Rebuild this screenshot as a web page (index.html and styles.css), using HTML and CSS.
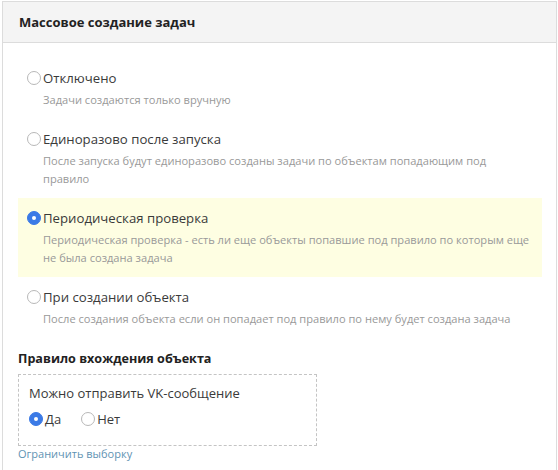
FILE: index.html
```html
<!DOCTYPE html>
<html lang="ru">
<head>
<meta charset="utf-8">
<link rel="stylesheet" href="styles.css">
</head>
<body>
<div class="panel">
  <div class="panel-head">Массовое создание задач</div>
  <div class="panel-body">
    <div class="options">
      <div class="option">
        <div class="label"><span class="radio"></span>Отключено</div>
        <div class="desc">Задачи создаются только вручную</div>
      </div>
      <div class="option">
        <div class="label"><span class="radio"></span>Единоразово после запуска</div>
        <div class="desc">После запуска будут единоразово созданы задачи по объектам попадающим под<br>правило</div>
      </div>
      <div class="option active">
        <div class="label"><span class="radio checked"></span>Периодическая проверка</div>
        <div class="desc">Периодическая проверка - есть ли еще объекты попавшие под правило по которым еще<br>не была создана задача</div>
      </div>
      <div class="option">
        <div class="label"><span class="radio"></span>При создании объекта</div>
        <div class="desc">После создания объекта если он попадает под правило по нему будет создана задача</div>
      </div>
    </div>
    <div class="section-title">Правило вхождения объекта</div>
    <div class="rule-box">
      <div class="rule-name">Можно отправить VK-сообщение</div>
      <div class="rule-choices">
        <span class="choice"><span class="radio checked"></span>Да</span>
        <span class="choice"><span class="radio"></span>Нет</span>
      </div>
    </div>
    <a class="link" href="#">Ограничить выборку</a>
  </div>
</div>
</body>
</html>
```
FILE: styles.css
```css
html, body {
  margin: 0;
  padding: 0;
  background: #fff;
}
body {
  font-family: "Open Sans", "Liberation Sans", Arial, sans-serif;
  color: #333;
  padding: 1px 1px 0 2px;
}
.panel {
  border: 1px solid #dcdcdc;
  border-bottom: none;
  height: 480px;
  box-sizing: border-box;
}
.panel-head {
  height: 40px;
  background: #f4f4f4;
  border-bottom: 1px solid #dcdcdc;
  padding-left: 16px;
  display: flex;
  align-items: center;
  font-weight: bold;
  font-size: 13px;
  color: #222;
}
.panel-body {
  padding: 15px 15px 0 15px;
}
.options {
  display: flex;
  flex-direction: column;
  width: 524px;
}
.option {
  padding: 10px 4px 10px 9px;
}
.option.active {
  background: #fefee2;
}
.label {
  display: flex;
  align-items: center;
  font-size: 13.2px;
  line-height: 20px;
  color: #3a3a3a;
}
.radio {
  width: 12px;
  height: 12px;
  border: 1px solid #b8b8b8;
  border-radius: 50%;
  box-sizing: content-box;
  margin-right: 2px;
  background: #fff;
  position: relative;
  flex: none;
}
.radio.checked {
  background: #3b7ae6;
  border-color: #3b7ae6;
}
.radio.checked::after {
  content: "";
  position: absolute;
  left: 4px;
  top: 4px;
  width: 4px;
  height: 4px;
  border-radius: 50%;
  background: #fff;
}
.desc {
  margin-top: 3px;
  padding-left: 16px;
  font-size: 11.1px;
  line-height: 18px;
  color: #999;
  white-space: nowrap;
}
.section-title {
  margin-top: 11px;
  font-weight: bold;
  font-size: 12.6px;
  line-height: 20px;
  color: #222;
}
.rule-box {
  margin-top: 5px;
  width: 299px;
  height: 72px;
  box-sizing: border-box;
  border: 1px dashed #c4c4c4;
  padding: 8px 10px;
}
.rule-name {
  font-size: 13px;
  line-height: 20px;
  color: #3a3a3a;
}
.rule-choices {
  display: flex;
  gap: 20px;
  margin-top: 6px;
  font-size: 13px;
  line-height: 20px;
  color: #3a3a3a;
}
.choice {
  display: flex;
  align-items: center;
}
.link {
  display: block;
  margin-top: 0;
  font-size: 11px;
  line-height: 16px;
  color: #5f93b3;
  text-decoration: none;
}
```
